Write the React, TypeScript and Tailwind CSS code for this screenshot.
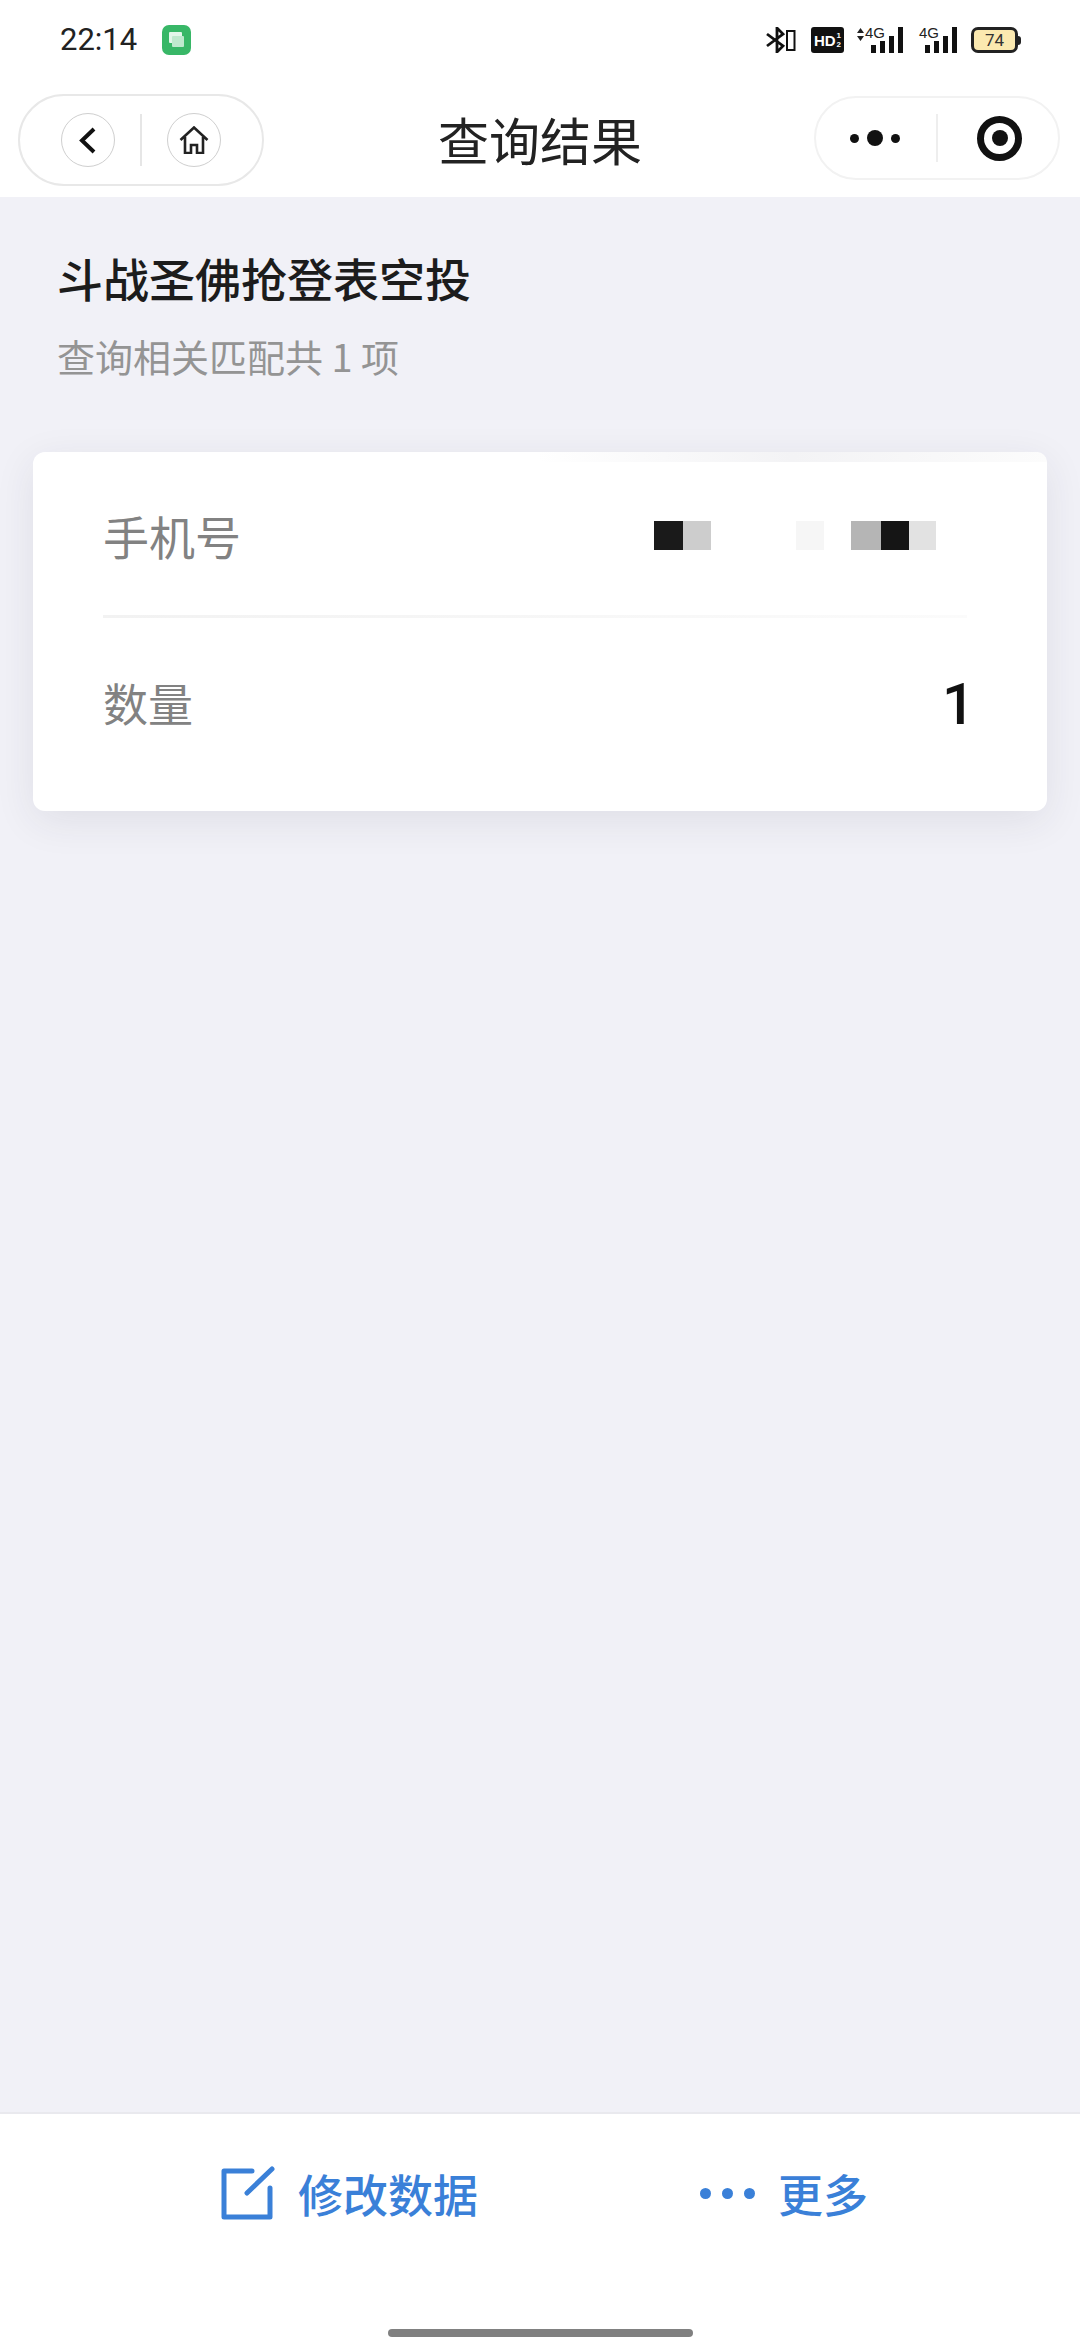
const cjk = "font-['Noto_Sans_CJK_SC',sans-serif]"

const mosaic = [
  { w: 'w-[29px]', c: 'bg-[#1a1a1a]' },
  { w: 'w-[28px]', c: 'bg-[#cdcdcd]' },
  { w: 'w-[85px]', c: 'bg-white' },
  { w: 'w-[28px]', c: 'bg-[#f6f6f6]' },
  { w: 'w-[27px]', c: 'bg-white' },
  { w: 'w-[30px]', c: 'bg-[#b5b5b5]' },
  { w: 'w-[28px]', c: 'bg-[#151515]' },
  { w: 'w-[27px]', c: 'bg-[#e2e2e2]' },
]

function Signal({ arrows }: { arrows?: boolean }) {
  return (
    <div className="relative h-[26px] w-[38px]">
      {arrows && (
        <svg className="absolute left-[-8px] top-[1px]" width="7" height="13" viewBox="0 0 7 13">
          <path d="M3.5 0L7 5H0zM3.5 13L0 8H7z" fill="#222" />
        </svg>
      )}
      <span className="absolute left-0 top-[-3px] font-['Liberation_Sans',sans-serif] text-[15px] leading-[18px] text-[#222]">4G</span>
      <div className="absolute bottom-0 right-0 flex items-end gap-[4px]">
        <div className="h-[8px] w-[5px] bg-[#111]" />
        <div className="h-[12px] w-[5px] bg-[#111]" />
        <div className="h-[17px] w-[5px] bg-[#111]" />
        <div className="h-[26px] w-[5px] bg-[#111]" />
      </div>
    </div>
  )
}

function StatusBar() {
  return (
    <div className="flex h-[60px] items-center justify-between pl-[60px] pr-[59px] pt-[20px]">
      <div className="flex items-center gap-[25px]">
        <span className="font-['Roboto',sans-serif] text-[31px] leading-[36px] text-[#222]">22:14</span>
        <div className="flex h-[30px] w-[29px] items-center justify-center rounded-[7px] bg-[#38b767]">
          <svg width="18" height="18" viewBox="0 0 18 18">
            <rect x="1" y="1" width="13" height="11" rx="1" fill="#e3f6ea" />
            <rect x="4" y="5" width="12" height="11" rx="1" fill="#bfe9ce" />
          </svg>
        </div>
      </div>
      <div className="flex items-center">
        <svg width="30" height="26" viewBox="0 0 30 26" fill="none" stroke="#111" strokeWidth="2.8">
          <path d="M1 7l16 12-6 6V1l6 6L1 19" />
          <rect x="21" y="4" width="7.5" height="19" strokeWidth="2" />
        </svg>
        <div className="ml-[15px] flex h-[26px] w-[33px] items-center justify-center gap-[1px] rounded-[3px] bg-[#111]">
          <span className="font-['Liberation_Sans',sans-serif] text-[15px] font-bold leading-none text-white">HD</span>
          <span className="flex flex-col font-['Liberation_Sans',sans-serif] text-[8px] font-bold leading-[9px] text-white">
            <span>1</span>
            <span>2</span>
          </span>
        </div>
        <div className="ml-[21px]"><Signal arrows /></div>
        <div className="ml-[16px]"><Signal /></div>
        <div className="ml-[14px] flex items-center">
          <div className="flex h-[26px] w-[47px] items-center justify-center rounded-[7px] border-[3px] border-[#222] bg-[#fbe9b0]">
            <span className="font-['Roboto',sans-serif] text-[17px] leading-none text-[#333]">74</span>
          </div>
          <div className="h-[9px] w-[3px] rounded-r-sm bg-[#222]" />
        </div>
      </div>
    </div>
  )
}

function NavBar() {
  return (
    <div className="relative flex h-[137px] items-start justify-between bg-white pl-[18px] pr-[20px] pt-[34px]">
      <div className="flex h-[92px] w-[246px] items-center rounded-full border-2 border-[#e8e8e8] pl-[41px]">
        <div className="flex h-[54px] w-[54px] items-center justify-center rounded-full border border-[#cfcfcf]">
          <svg width="22" height="28" viewBox="0 0 22 28" fill="none" stroke="#111" strokeWidth="4">
            <path d="M17 3L5 14.5 17 26" />
          </svg>
        </div>
        <div className="mx-[25px] h-[52px] w-[2px] bg-[#e6e6e6]" />
        <div className="flex h-[54px] w-[54px] items-center justify-center rounded-full border border-[#cfcfcf]">
          <svg width="30" height="28" viewBox="0 0 30 28" fill="none" stroke="#222" strokeWidth="2.6">
            <path d="M1.5 14L15 1.5 28.5 14M6 11v16h6v-8h6v8h6V11" />
          </svg>
        </div>
      </div>
      <span className={`absolute left-[438px] top-[47px] text-[51px] leading-[64px] text-[#222] ${cjk}`}>查询结果</span>
      <div className="mt-[2px] flex h-[84px] w-[246px] items-center rounded-full border-2 border-[#f2f2f2]">
        <div className="flex w-[84px] items-center justify-end gap-[8px]">
          <div className="h-[9px] w-[9px] rounded-full bg-[#111]" />
          <div className="h-[16px] w-[16px] rounded-full bg-[#111]" />
          <div className="h-[9px] w-[9px] rounded-full bg-[#111]" />
        </div>
        <div className="ml-[36px] h-[48px] w-[2px] bg-[#eeeeee]" />
        <div className="ml-[39px] flex h-[45px] w-[45px] items-center justify-center rounded-full border-[7px] border-[#111]">
          <div className="h-[16px] w-[16px] shrink-0 rounded-full bg-[#111]" />
        </div>
      </div>
    </div>
  )
}

export default function App() {
  return (
    <div className={`flex h-[2340px] w-[1080px] flex-col bg-[#f1f1f7] ${cjk}`}>
      <div className="bg-white">
        <StatusBar />
        <NavBar />
      </div>

      <div className="flex-1 px-[33px]">
        <div className="px-[24px] pt-[50px]">
          <h1 className="text-[46px] font-medium leading-[60px] text-[#1c1c1c]">斗战圣佛抢登表空投</h1>
          <p className="mt-[26px] text-[38px] leading-[46px] text-[#949494]">查询相关匹配共 1 项</p>
        </div>

        <div className="relative mt-[73px] h-[359px] rounded-[12px] bg-white px-[70px] pt-[46px] shadow-[0_10px_40px_rgba(40,40,70,0.09)]">
          <div className="absolute right-0 top-0 h-[10px] w-[510px] rounded-tr-[12px] bg-gradient-to-r from-white via-[#f3f3f5] to-[#fcfcfc]" />
          <div className="flex h-[74px] items-center">
            <span className="text-[46px] leading-none text-[#828282]">手机号</span>
            <div className="ml-auto mr-[41px] flex h-[29px]">
              {mosaic.map((m, i) => (
                <div key={i} className={`${m.w} ${m.c}`} />
              ))}
            </div>
          </div>
          <div className="mt-[43px] h-[3px] w-[864px] bg-gradient-to-r from-[#f2f2f2] to-[#fbfbfb]" />
          <div className="mt-[47px] flex h-[74px] w-[872px] items-center justify-between">
            <span className="text-[45px] leading-none text-[#828282]">数量</span>
            <span className="mt-[3px] font-['Roboto',sans-serif] text-[58px] font-medium leading-none text-[#111]">1</span>
          </div>
        </div>
      </div>

      <div className="flex h-[228px] flex-col border-t-2 border-[#e9e9ee] bg-white">
        <div className="flex h-[158px] items-center pl-[221px]">
          <svg width="54" height="54" viewBox="0 0 54 54" fill="none" stroke="#3a80d8" strokeWidth="5" strokeLinecap="round" strokeLinejoin="round">
            <path d="M31 5H3v46h46V22M26 27L51 3" />
          </svg>
          <span className="ml-[23px] text-[45px] font-medium leading-none text-[#3a80d8]">修改数据</span>
          <div className="ml-[222px] flex items-center gap-[11px]">
            <div className="h-[11px] w-[11px] rounded-full bg-[#3a80d8]" />
            <div className="h-[11px] w-[11px] rounded-full bg-[#3a80d8]" />
            <div className="h-[11px] w-[11px] rounded-full bg-[#3a80d8]" />
          </div>
          <span className="ml-[23px] text-[45px] font-medium leading-none text-[#3a80d8]">更多</span>
        </div>
        <div className="mx-auto mt-[57px] h-[8px] w-[305px] rounded-full bg-[#808080]" />
      </div>
    </div>
  )
}
